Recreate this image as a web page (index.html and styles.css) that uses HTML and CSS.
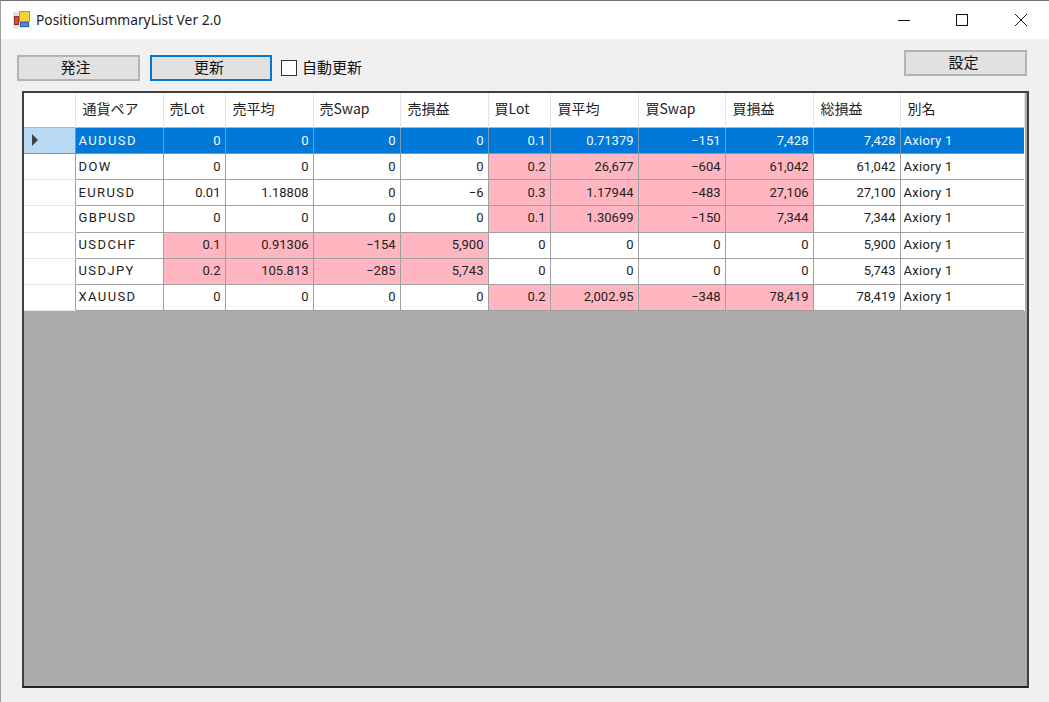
FILE: index.html
```html
<!DOCTYPE html>
<html lang="ja">
<head>
<meta charset="utf-8">
<title>PositionSummaryList Ver 2.0</title>
<link rel="stylesheet" href="styles.css">
</head>
<body>
<div class="window">
  <header class="titlebar">
    <svg class="app-icon" width="17" height="18" viewBox="0 0 17 18">
      <rect x="0" y="2" width="17" height="16" fill="#e4e0dc"/>
      <rect x="6.5" y="1.5" width="10" height="10" fill="#f6d030" stroke="#b89a30"/>
      <rect x="1.5" y="6.5" width="4" height="8" fill="#d8503c" stroke="#8c3020"/>
      <rect x="7.5" y="12.5" width="8" height="4" fill="#4a8ae0" stroke="#3060a8"/>
    </svg>
    <span class="title">PositionSummaryList Ver 2.0</span>
    <div class="winbtns">
      <svg width="13" height="14" viewBox="0 0 13 14"><path d="M0 7.5H12" stroke="#111" fill="none"/></svg>
      <svg width="13" height="14" viewBox="0 0 13 14"><rect x="0.5" y="1.5" width="11" height="11" stroke="#111" fill="none"/></svg>
      <svg width="14" height="14" viewBox="0 0 14 14"><path d="M1 1L13 13M13 1L1 13" stroke="#111" fill="none"/></svg>
    </div>
  </header>
  <main class="content">
    <div class="toolbar">
      <button class="btn order">発注</button>
      <button class="btn refresh">更新</button>
      <label class="auto"><span class="check"></span>自動更新</label>
      <button class="btn settings">設定</button>
    </div>
    <div class="grid">
      <table>
        <colgroup>
          <col class="c-rh"><col class="c88"><col class="c62"><col class="c88"><col class="c87"><col class="c88"><col class="c62"><col class="c88"><col class="c87"><col class="c88"><col class="c87"><col class="c-last">
        </colgroup>
        <thead>
          <tr><th class="rh"></th><th>通貨ペア</th><th class="tight">売Lot</th><th>売平均</th><th class="tight">売Swap</th><th>売損益</th><th class="tight">買Lot</th><th>買平均</th><th>買Swap</th><th>買損益</th><th>総損益</th><th>別名</th></tr>
        </thead>
        <tbody>
          <tr class="sel"><td class="rh"><span class="arrow"></span></td><td>AUDUSD</td><td>0</td><td>0</td><td>0</td><td>0</td><td>0.1</td><td>0.71379</td><td>−151</td><td>7,428</td><td>7,428</td><td>Axiory 1</td></tr>
          <tr><td class="rh"></td><td>DOW</td><td>0</td><td>0</td><td>0</td><td>0</td><td class="p">0.2</td><td class="p">26,677</td><td class="p">−604</td><td class="p">61,042</td><td>61,042</td><td>Axiory 1</td></tr>
          <tr><td class="rh"></td><td>EURUSD</td><td>0.01</td><td>1.18808</td><td>0</td><td>−6</td><td class="p">0.3</td><td class="p">1.17944</td><td class="p">−483</td><td class="p">27,106</td><td>27,100</td><td>Axiory 1</td></tr>
          <tr class="tall"><td class="rh"></td><td>GBPUSD</td><td>0</td><td>0</td><td>0</td><td>0</td><td class="p">0.1</td><td class="p">1.30699</td><td class="p">−150</td><td class="p">7,344</td><td>7,344</td><td>Axiory 1</td></tr>
          <tr><td class="rh"></td><td>USDCHF</td><td class="p">0.1</td><td class="p">0.91306</td><td class="p">−154</td><td class="p">5,900</td><td>0</td><td>0</td><td>0</td><td>0</td><td>5,900</td><td>Axiory 1</td></tr>
          <tr><td class="rh"></td><td>USDJPY</td><td class="p">0.2</td><td class="p">105.813</td><td class="p">−285</td><td class="p">5,743</td><td>0</td><td>0</td><td>0</td><td>0</td><td>5,743</td><td>Axiory 1</td></tr>
          <tr><td class="rh"></td><td>XAUUSD</td><td>0</td><td>0</td><td>0</td><td>0</td><td class="p">0.2</td><td class="p">2,002.95</td><td class="p">−348</td><td class="p">78,419</td><td>78,419</td><td>Axiory 1</td></tr>
        </tbody>
      </table>
    </div>
  </main>
</div>
</body>
</html>
```
FILE: styles.css
```css
* { box-sizing: border-box; }
html, body { margin: 0; height: 100%; overflow: hidden; }
body { width: 1049px; height: 702px; background: #f0f0f0; font-family: "Noto Sans CJK JP", sans-serif; color: #111; }
.window { height: 702px; display: flex; flex-direction: column; border-top: 1px solid #707070; border-left: 1px solid #a0a0a0; }
.titlebar { height: 38px; flex: none; background: #fff; display: flex; align-items: center; padding-left: 12px; padding-bottom: 1px; }
.app-icon { flex: none; margin-top: -2px; }
.title { font-family: "Noto Sans", sans-serif; font-size: 13.8px; margin-left: 6px; color: #222; }
.winbtns { margin-left: auto; display: flex; gap: 45px; padding-right: 21px; }
.content { flex: 1; padding: 11px 21px 14px 21px; display: flex; flex-direction: column; }
.toolbar { height: 41px; flex: none; display: flex; align-items: flex-start; }
.btn { width: 123px; height: 26px; margin-top: 5px; background: #e1e1e1; border: 2px solid #b4b4b4; font-family: inherit; font-size: 15px; color: #111; padding: 0 6px 3px 0; line-height: 1; }
.order { margin-left: -5px; }
.refresh { margin-left: 10px; width: 122px; border-color: #0078d7; padding-right: 4px; }
.auto { display: flex; align-items: center; height: 26px; margin-top: 3px; margin-left: 9px; font-size: 15px; }
.check { width: 16px; height: 16px; margin-top: 4px; background: #fff; border: 1px solid #333; margin-right: 5px; }
.settings { margin-left: auto; margin-top: 0; margin-right: 1px; padding-right: 4px; }
.grid { flex: 1; border: 2px solid #404040; background: #ababab; border-bottom-color: #222; margin-right: -1px; }
table { border-collapse: collapse; table-layout: fixed; width: 1000px; background: #fff; }
.c-rh { width: 51px; }
.c88 { width: 88px; }
.c87 { width: 87px; }
.c62 { width: 62px; }
.c-last { width: 124px; }
th { height: 34px; font-weight: 400; font-size: 14px; text-align: left; padding: 0 0 3px 7px; border-right: 1px solid #e2e2e2; background: #fff; color: #222; }
th.tight { padding-left: 6px; }
td { height: 26px; padding: 0 4px; font-family: Roboto, sans-serif; font-size: 13px; text-align: right; border: 1px solid #a0a0a0; background: #fff; color: #222; }
td:nth-child(2) { text-align: left; padding-left: 3px; letter-spacing: 1.4px; }
td:last-child { text-align: left; padding-left: 3px; letter-spacing: .3px; border-right: 0; }
.tall td { height: 27px; padding-bottom: 2px; }
.tall ~ tr td { padding-bottom: 2px; }
td.rh { border-left: 0; border-top: 1px solid #e4e4e4; border-bottom: 1px solid #e4e4e4; padding: 0 0 0 8px; text-align: left; }
tr:first-child td { border-top-color: #a0b8cc; }
td.p { background: #ffb6c1; }
.sel td { background: #0078d7; color: #f0f8ff; border-color: #6a9cc4; }
.sel td.rh { background: #b8d9f3; }
.arrow { display: block; width: 0; height: 0; border-left: 6px solid #404040; border-top: 6px solid transparent; border-bottom: 6px solid transparent; }
```
